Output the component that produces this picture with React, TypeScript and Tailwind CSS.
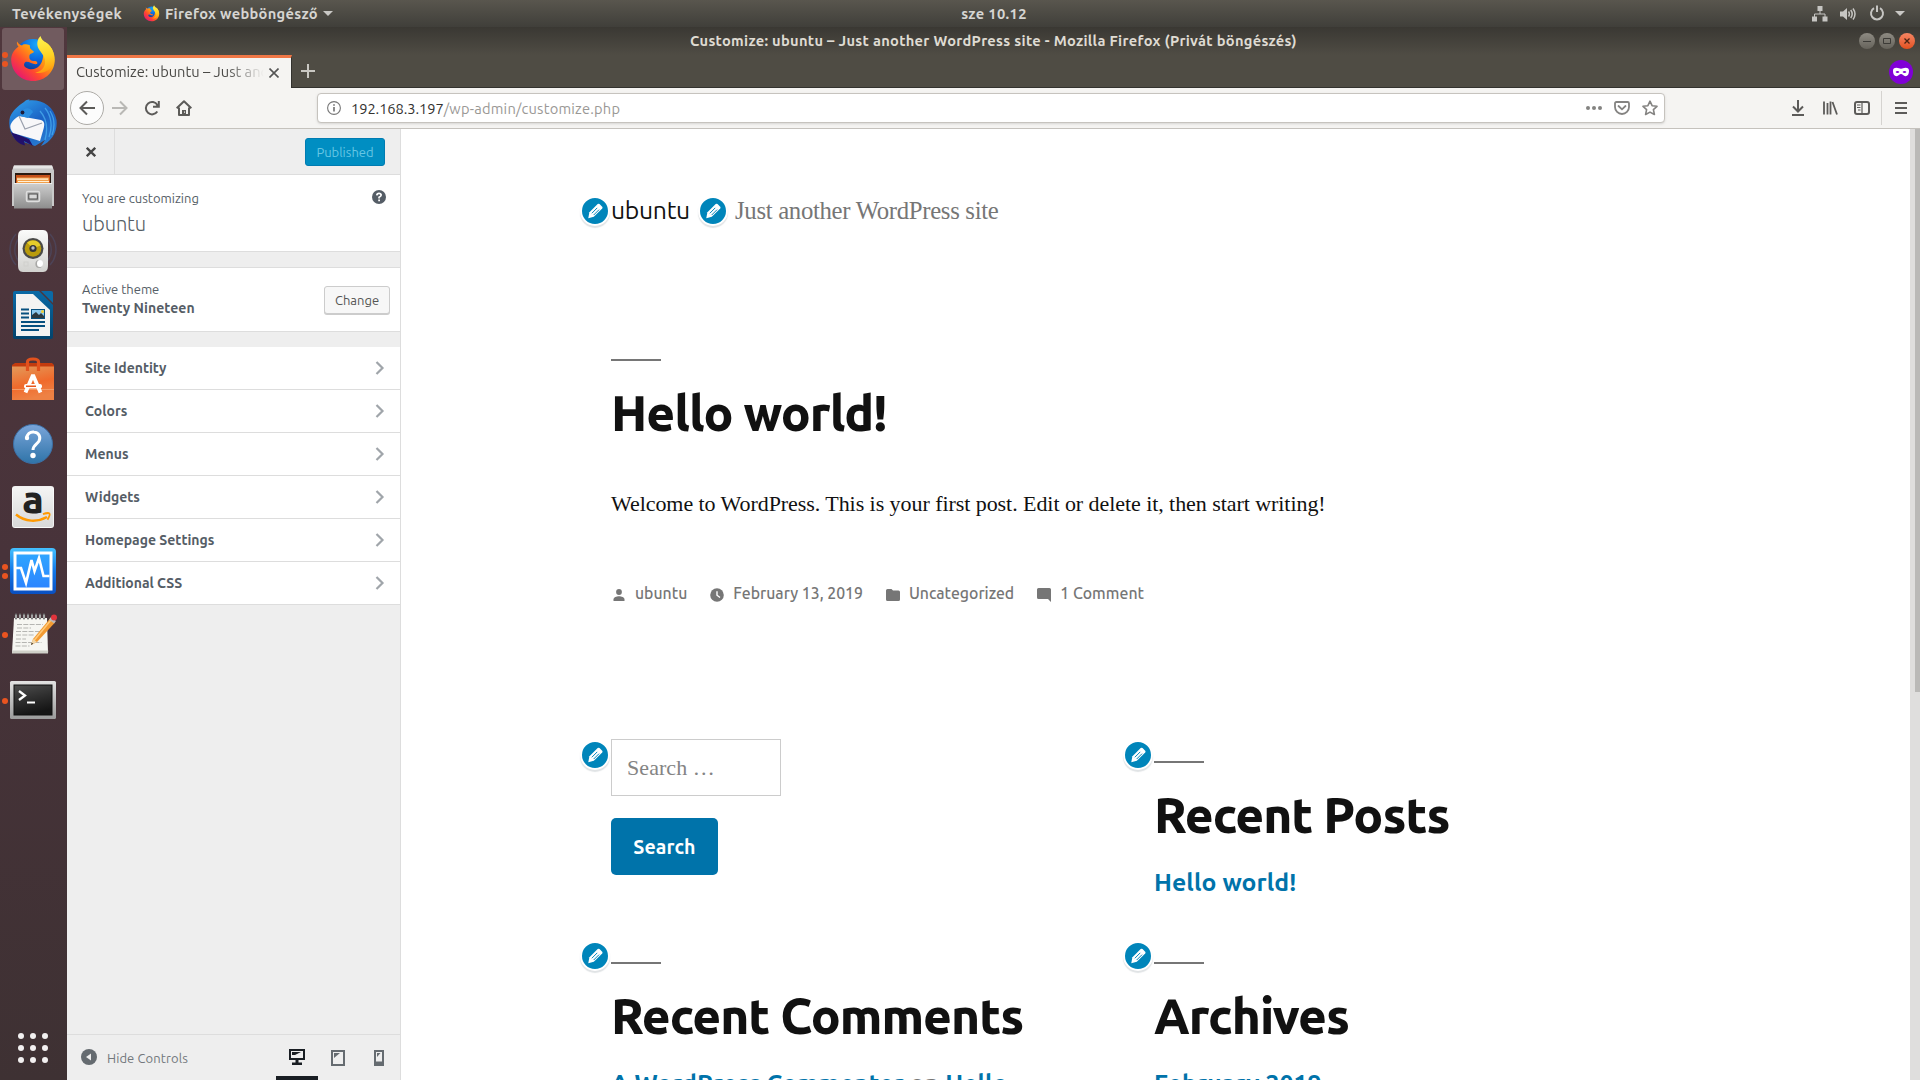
import React from "react";

/* ---------- dock icons ---------- */

function FirefoxLogo({ className, id }: { className: string; id: string }) {
  return (
    <svg viewBox="0 0 48 48" className={className}>
      <defs>
        <linearGradient id={id + "-body"} x1="0.9" y1="0.1" x2="0.1" y2="0.9">
          <stop offset="0" stopColor="#ffe226" />
          <stop offset="0.35" stopColor="#ff9d10" />
          <stop offset="0.65" stopColor="#ff4a2e" />
          <stop offset="1" stopColor="#e3117a" />
        </linearGradient>
        <radialGradient id={id + "-globe"} cx="0.6" cy="0.15" r="0.9">
          <stop offset="0" stopColor="#18a8fb" />
          <stop offset="0.5" stopColor="#0a64dc" />
          <stop offset="1" stopColor="#14246e" />
        </radialGradient>
        <linearGradient id={id + "-flame"} x1="0.4" y1="0" x2="0.5" y2="1">
          <stop offset="0" stopColor="#fff44f" />
          <stop offset="0.55" stopColor="#ffd325" />
          <stop offset="1" stopColor="#ff980e" />
        </linearGradient>
      </defs>
      <circle cx="24" cy="22" r="18" fill={"url(#" + id + "-globe)"} />
      <path d="M8 6.500C7.500 9 8.500 10.500 9.500 11.500 4.500 15 2 20 2.200 25.500 2.800 37.500 12.500 46 24.200 46 36.500 46 45.800 36.500 45.800 24.500 45.800 18 42 10 36 7L34 22C33 30 28 35.500 20 34 14.500 32.500 14 29 16.500 27 20 26 24 30 28 29 29 28 28 26 26 26 21 26 20 24 20.500 20 22 18 24.500 18 25 17 24 15 20 14.500 21 10.500 16 8.500 14 9.500 13 10.500 10 9.500 9 8 8 6.500Z" fill={"url(#" + id + "-body)"} />
      <path d="M31.500 1C28 4.500 27.500 9.500 29.500 13.500 32 18 37 22 36 28.500 35 34 30.500 37 26 37.500 34 39.500 41.500 35.500 44 29 47 20 43.500 12 37.500 8 34.500 6 32 4 31.500 1Z" fill={"url(#" + id + "-flame)"} />
    </svg>
  );
}

function ThunderbirdLogo() {
  return (
    <svg viewBox="0 0 48 48" className="size-12">
      <defs>
        <linearGradient id="tb-body" x1="0.2" y1="0" x2="0.8" y2="1">
          <stop offset="0" stopColor="#2f9be8" />
          <stop offset="0.5" stopColor="#1b62c4" />
          <stop offset="1" stopColor="#2a7fd4" />
        </linearGradient>
      </defs>
      <path d="M15 3C18 0 22 0 20 1.500 32 0 45 7 47.500 21 49 33 42 43 32 47L36 41 26 47 6 40C1 34-1 26 1 18 4 11 9 7 15 3Z" fill="url(#tb-body)" />
      <path d="M2 33C5 41 10 45 16 46.500L15 42 24 47 20 40Z" fill="#21106a" />
      <path d="M36 9C42 16 44 27 40 38M31 12C38 20 39 30 36 41M41 12c5 8 5 16 2 24" stroke="#4db4f2" strokeWidth="1.300" fill="none" opacity=".7" />
      <path d="M1.500 26C3 22 7 18.500 10 17L32 21C35 22 36 24 34.500 30L31 42 4 34C1.500 31 1 28 1.500 26Z" fill="#f7f7f9" />
      <path d="M10 17L16 30 33 24" stroke="#9aa0ad" strokeWidth="1.200" fill="none" />
      <path d="M12 13c4-5 9-5 12 0l-5 6-8-2Z" fill="#2a8de0" />
      <circle cx="13.500" cy="13.500" r="1.900" fill="#1d1d3a" />
    </svg>
  );
}

function FilesLogo() {
  return (
    <svg viewBox="0 0 48 48" className="size-12">
      <defs>
        <linearGradient id="fl-front" x1="0" y1="0" x2="0" y2="1">
          <stop offset="0" stopColor="#cfcfcf" />
          <stop offset="1" stopColor="#8d8d8d" />
        </linearGradient>
      </defs>
      <path d="M5 2.500h38l2 5V43H3V7.500Z" fill="#c9c9c9" />
      <path d="M5 2.500h38l1 3H4Z" fill="#e6e6e6" />
      <path d="M6 10h36v12H6Z" fill="#2b1a12" />
      <path d="M7 12h34v10H7Z" fill="#c4511c" />
      <path d="M8 14.500h32v7H8Z" fill="#f2a04a" />
      <path d="M8 15.500h31v1.200H8ZM9 18h31v.9H9Z" fill="#fff0d8" />
      <path d="M5 20h38v25.500H5Z" fill="url(#fl-front)" />
      <path d="M5 20h38v1H5Z" fill="#ededed" />
      <rect x="17.500" y="28.500" width="13" height="10" rx="1.500" fill="#a9a9a9" stroke="#dedede" strokeWidth="1.500" />
      <rect x="19.800" y="31" width="8.500" height="5" fill="#d8d8d8" stroke="#4a4a4a" />
    </svg>
  );
}

function RhythmboxLogo() {
  return (
    <svg viewBox="0 0 48 48" className="size-12">
      <defs>
        <linearGradient id="rb-box" x1="0" y1="0" x2="0" y2="1">
          <stop offset="0" stopColor="#fbfbfa" />
          <stop offset="1" stopColor="#d2d2cf" />
        </linearGradient>
      </defs>
      <path d="M7 7C-1 16-1 29 7 38M11 10C4 18 4 28 11 36M41 7c8 9 8 22 0 31M37 10c7 8 7 18 0 26" stroke="#4c5f8a" strokeWidth="1.500" fill="none" opacity=".35" />
      <path d="M14 3h20c4 0 5 3 5 7v28c0 4-1 7-5 7H14c-4 0-5-3-5-7V10c0-4 1-7 5-7Z" fill="url(#rb-box)" />
      <circle cx="24" cy="21.500" r="10.500" fill="#4a4a48" />
      <circle cx="24" cy="21.500" r="8.300" fill="#b99b0c" />
      <path d="M24 13.500a8 8 0 0 1 7.500 5L24 21.500l-6-6a8 8 0 0 1 6-2Z" fill="#e6cc2a" />
      <circle cx="24" cy="21.500" r="3.600" fill="#353538" />
      <circle cx="24" cy="21" r="1.700" fill="#b9bcc4" />
      <ellipse cx="30" cy="37" rx="3.600" ry="4" fill="#a9a9a7" />
      <ellipse cx="31" cy="36.500" rx="3" ry="3.600" fill="#fff" />
      <rect x="15" y="35" width="4" height="4" fill="none" stroke="#d0d0cc" />
    </svg>
  );
}

function WriterLogo() {
  return (
    <svg viewBox="0 0 48 48" className="size-12">
      <defs>
        <linearGradient id="wr" x1="0" y1="0" x2="0" y2="1">
          <stop offset="0" stopColor="#0a6aa6" />
          <stop offset="1" stopColor="#02436c" />
        </linearGradient>
      </defs>
      <path d="M6 0h24l14 14v32a2 2 0 0 1-2 2H6a2 2 0 0 1-2-2V2a2 2 0 0 1 2-2Z" fill="url(#wr)" />
      <path d="M32 0h10a2 2 0 0 1 2 2v10Z" fill="#0b6aa6" />
      <path d="M7 3h17l17 16v26H7Z" fill="#f3f3f2" />
      <path d="M12 18.500h8M12 22.500h8M12 26.500h8M12 31h24M12 35h24M12 39h18" stroke="#07507f" strokeWidth="2" />
      <rect x="22.500" y="18.500" width="13" height="9" fill="#8cc9ee" stroke="#07507f" />
      <path d="M23 27v-3l4-3 3 3 2-2 3 3v2Z" fill="#2d3a40" />
      <circle cx="33.500" cy="20.500" r="1.500" fill="#f2cf32" />
    </svg>
  );
}

function SoftwareLogo() {
  return (
    <svg viewBox="0 0 48 48" className="mt-[2px] size-12">
      <defs>
        <linearGradient id="sw" x1="0" y1="0" x2="0.3" y2="1">
          <stop offset="0" stopColor="#e39a5a" />
          <stop offset="0.6" stopColor="#f06a2c" />
          <stop offset="1" stopColor="#ee8144" />
        </linearGradient>
      </defs>
      <path d="M3 9l3-2h37l2 2v5H3Z" fill="#c23b0e" />
      <path d="M3 10.500h42V44H3Z" fill="url(#sw)" />
      <path d="M3 33h42v1H3Z" fill="#f49a66" />
      <path d="M18.500 15V6q0-3 5.500-3t5.500 3v9" stroke="#e2521d" strokeWidth="3.200" fill="none" />
      <path d="M16.500 36.500l7.500-17.500 7.500 17.500" stroke="#fff" strokeWidth="3.800" fill="none" strokeLinejoin="bevel" />
      <rect x="15" y="28" width="18" height="4.500" rx="2" fill="#fff" />
      <rect x="17" y="29.500" width="10" height="1.500" fill="#e8571d" />
    </svg>
  );
}

function HelpLogo() {
  return (
    <svg viewBox="0 0 48 48" className="mt-px size-12">
      <defs>
        <linearGradient id="hp" x1="0" y1="0" x2="0" y2="1">
          <stop offset="0" stopColor="#7aa5da" />
          <stop offset="1" stopColor="#2f74a8" />
        </linearGradient>
      </defs>
      <circle cx="24" cy="24" r="19.500" fill="url(#hp)" stroke="#3c6fa5" />
      <path d="M17.500 18.500C18 14 21 11.500 25 12c5 .5 7 5 5 9-2 3.500-6 4-6 9" stroke="#fff" strokeWidth="3" fill="none" />
      <circle cx="18" cy="18" r="2.200" fill="#fff" />
      <circle cx="24" cy="35.500" r="2.700" fill="#fff" />
    </svg>
  );
}

function AmazonLogo() {
  return (
    <div className="relative flex size-[42px] justify-center rounded-[3px] border border-white/60 bg-linear-to-b from-[#f4f4f4] to-[#d9d9d9]">
      <span className="-mt-[11px] font-[Ubuntu,'Noto_Sans',sans-serif] text-[39px] leading-[46px] font-extrabold text-[#222]">a</span>
      <svg viewBox="0 0 40 14" className="absolute bottom-[3px] left-0 h-[14px] w-10">
        <path d="M3 4.500C12 12 24 12.500 34 7" stroke="#ff9900" strokeWidth="2.500" fill="none" />
        <path d="M30 4.200c3-1.200 6-1.200 6.500-.5s-.5 3.500-2 6" stroke="#ff9900" strokeWidth="1.800" fill="none" />
      </svg>
    </div>
  );
}

function MonitorLogo() {
  return (
    <svg viewBox="0 0 48 48" className="size-12">
      <defs>
        <linearGradient id="mn" x1="0" y1="0" x2="0" y2="1">
          <stop offset="0" stopColor="#44c1ff" />
          <stop offset="0.5" stopColor="#1277e8" />
          <stop offset="1" stopColor="#0a4fc0" />
        </linearGradient>
        <linearGradient id="mn2" x1="0" y1="0" x2="0" y2="1">
          <stop offset="0" stopColor="#2fa6ff" />
          <stop offset="1" stopColor="#2c84ff" />
        </linearGradient>
      </defs>
      <rect x="1" y="1" width="46" height="46" rx="4" fill="url(#mn)" />
      <rect x="6" y="6" width="36" height="36" fill="url(#mn2)" stroke="#fff" strokeWidth="3" />
      <path d="M7 21h5l5 15 5.500-23 3 11 4.500-13 4.500 18h6" stroke="#fff" strokeWidth="2.600" fill="none" />
    </svg>
  );
}

function NotesLogo() {
  return (
    <svg viewBox="0 0 48 48" className="size-12">
      <path d="M5 7h33l1 35H3Z" fill="#f6f6f2" />
      <path d="M3.200 39.500h36L39 42.500H3Z" fill="#cfd0c8" />
      <path d="M7 7.500v-4M11 7.500v-4M15 7.500v-4M19 7.500v-4M23 7.500v-4M27 7.500v-4M31 7.500v-4M35 7.500v-4" stroke="#777" strokeWidth="2.200" strokeLinecap="round" />
      <path d="M7 7v-3M11 7v-3M15 7v-3M19 7v-3M23 7v-3M27 7v-3M31 7v-3M35 7v-3" stroke="#e8e8e8" strokeWidth=".8" />
      <path d="M8 13.500h26M8 17h14M7 20.500h24M7 24h18M7 28h10M6.500 31.500h26M6.500 35h14" stroke="#b5b5b2" strokeWidth="1.200" strokeDasharray="5 1.300" />
      <path d="M22 34l2-6L41 7.500l5 4L28 31Z" fill="#f39a31" />
      <path d="M25 29.500L42 9" stroke="#ffca7a" strokeWidth="1.500" />
      <path d="M22 34l2-6 4 3Z" fill="#f1d6a8" />
      <path d="M22 34l.8-2.200 1.400 1Z" fill="#222" />
      <path d="M40 8.500l2-2.500 5 4-2 2.500Z" fill="#b9b9b9" />
      <circle cx="45" cy="6.500" r="3" fill="#e0343c" />
    </svg>
  );
}

function TerminalLogo() {
  return (
    <svg viewBox="0 0 48 48" className="size-12">
      <defs>
        <linearGradient id="tm" x1="0" y1="0" x2="0.3" y2="1">
          <stop offset="0" stopColor="#4e4e4e" />
          <stop offset="0.5" stopColor="#303030" />
          <stop offset="1" stopColor="#151515" />
        </linearGradient>
        <linearGradient id="tm2" x1="0" y1="0" x2="0" y2="1">
          <stop offset="0" stopColor="#e2e2e2" />
          <stop offset="1" stopColor="#9b9b9b" />
        </linearGradient>
      </defs>
      <rect x="1" y="4" width="46" height="38" rx="1.500" fill="url(#tm2)" />
      <rect x="5" y="8" width="38" height="30" fill="url(#tm)" stroke="#111" />
      <path d="M10 14l6 4.500-6 4.500" stroke="#fff" strokeWidth="2.300" fill="none" />
      <path d="M18 25.500h8" stroke="#fff" strokeWidth="2" />
    </svg>
  );
}

const dockItems = [
  { icon: <FirefoxLogo className="size-12" id="ffd" />, dots: 2, active: true },
  { icon: <ThunderbirdLogo />, dots: 0 },
  { icon: <FilesLogo />, dots: 0 },
  { icon: <RhythmboxLogo />, dots: 0 },
  { icon: <WriterLogo />, dots: 0 },
  { icon: <SoftwareLogo />, dots: 0 },
  { icon: <HelpLogo />, dots: 0 },
  { icon: <AmazonLogo />, dots: 0 },
  { icon: <MonitorLogo />, dots: 2 },
  { icon: <NotesLogo />, dots: 1 },
];

function DockItem({ icon, dots, active }: { icon: React.ReactNode; dots: number; active?: boolean }) {
  return (
    <div className={"relative flex h-[62px] w-[62px] items-center justify-center rounded-[3px] " + (active ? "bg-[#715b5f]" : "")}>
      <div className="absolute top-0 left-0 flex h-full w-[6px] flex-col items-center justify-center gap-[3px]">
        {Array.from({ length: dots }, (_, i) => (
          <span key={i} className="size-[6px] rounded-full bg-[#e95420]" />
        ))}
      </div>
      {icon}
    </div>
  );
}

function Dock() {
  return (
    <div className="flex w-[67px] shrink-0 flex-col bg-linear-to-b from-[#50373d] via-[#48333a] to-[#3e3133] pt-px pl-[2px]">
      <div className="flex flex-col gap-[2px]">
        {dockItems.map((d, i) => (
          <DockItem key={i} {...d} />
        ))}
      </div>
      <div className="mt-[4px]">
        <DockItem icon={<TerminalLogo />} dots={1} />
      </div>
      <div className="mt-auto mb-[17px] ml-[16px] grid w-[30px] grid-cols-3 gap-[6px]">
        {Array.from({ length: 9 }, (_, i) => (
          <span key={i} className="size-[6px] rounded-full bg-[#f2f0f0]" />
        ))}
      </div>
    </div>
  );
}

/* ---------- desktop top bar ---------- */

function TopBar() {
  return (
    <div className="grid h-[27px] shrink-0 grid-cols-[1fr_auto_1fr] items-center bg-linear-to-b from-[#59564e] to-[#403f3a] text-[14.67px] leading-[27px] font-bold tracking-[0.36px] text-[#d6d5d2]">
      <div className="flex items-center pl-[12px]">
        <span>Tevékenységek</span>
        <FirefoxLogo className="ml-[21px] size-[17px]" id="ffs" />
        <span className="ml-[5px] tracking-[0.3px]">Firefox webböngésző</span>
        <svg viewBox="0 0 10 5" className="ml-[5px] h-[5px] w-[10px]">
          <path d="M0 0h10L5 5Z" fill="#c9c8c5" />
        </svg>
      </div>
      <span className="translate-x-[34px]">sze 10.12</span>
      <div className="flex items-center justify-end pr-[15px]">
        <svg viewBox="0 0 16 16" className="size-4" fill="#c6c5c2">
          <path d="M5.500 0h5v5h-5ZM0 10.500h5v5H0ZM10.500 10.500h5v5h-5Z" />
          <path d="M8 5v3M2.500 11V8h10.500v3" stroke="#c6c5c2" fill="none" />
        </svg>
        <svg viewBox="0 0 16 14" className="ml-[12px] h-[14px] w-4">
          <path d="M0 4.500h3L7 1v12L3 9.500H0Z" fill="#c6c5c2" />
          <path d="M8.500 4.500q1.800 2.500 0 5M10.700 3q3 4 0 8M13 1.500q4 5.500 0 11" stroke="#c6c5c2" strokeWidth="1.500" fill="none" />
        </svg>
        <svg viewBox="0 0 16 16" className="-mt-px ml-[13px] size-4" fill="none" stroke="#c6c5c2" strokeWidth="2">
          <path d="M5 3.200a6 6 0 1 0 6 0M8 .5v6.500" />
        </svg>
        <svg viewBox="0 0 10 5" className="ml-[10px] h-[5px] w-[10px]">
          <path d="M0 0h10L5 5Z" fill="#c9c8c5" />
        </svg>
      </div>
    </div>
  );
}

/* ---------- browser chrome ---------- */

function TitleBar() {
  return (
    <div className="relative flex h-[28px] shrink-0 items-center justify-center bg-linear-to-b from-[#3a3833] to-[#4f4c44] text-[14.67px] font-bold tracking-[0.3px] text-[#dfdbd2]">
      <span>Customize: ubuntu – Just another WordPress site - Mozilla Firefox (Privát böngészés)</span>
      <div className="absolute top-[6px] right-[5px] flex gap-1">
        <span className="size-4 rounded-full bg-linear-to-b from-[#8e8b83] to-[#66635b]">
          <svg viewBox="0 0 16 16"><path d="M4 8.500h8" stroke="#3c3b37" /></svg>
        </span>
        <span className="size-4 rounded-full bg-linear-to-b from-[#8e8b83] to-[#66635b]">
          <svg viewBox="0 0 16 16"><path d="M4.500 5.500h7v5h-7Z" stroke="#3c3b37" fill="none" /></svg>
        </span>
        <span className="size-4 rounded-full bg-linear-to-b from-[#f58562] to-[#e2501c]">
          <svg viewBox="0 0 16 16"><path d="M5.500 5.500l5 5M10.500 5.500l-5 5" stroke="#4a2413" strokeWidth="1.300" /></svg>
        </span>
      </div>
    </div>
  );
}

function TabBar() {
  return (
    <div className="flex h-[33px] shrink-0 bg-[#4f4c44]">
      <div className="flex w-[225px] items-center border-t-[3px] border-r border-t-[#f07746] border-r-[#33322e] bg-[#f5f4f2] pl-[9px]">
        <div className="h-[30px] w-[188px] overflow-hidden mask-r-from-80% mask-r-to-100% text-[14.67px] leading-[28px] whitespace-nowrap text-[#4a4946]">
          Customize: ubuntu – Just another
        </div>
        <svg viewBox="0 0 10 10" className="-mt-px ml-[5px] size-[10px]">
          <path d="M.5.5l9 9M9.500.5l-9 9" stroke="#555" strokeWidth="1.600" />
        </svg>
      </div>
      <div className="flex flex-1 items-center border-b border-[#33322e]">
        <svg viewBox="0 0 14 14" className="ml-[9px] size-[14px]">
          <path d="M7 0v14M0 7h14" stroke="#c9c7c2" strokeWidth="2" />
        </svg>
        <span className="mt-px mr-[7px] ml-auto flex size-6 items-center justify-center rounded-full bg-[#8000d7]">
          <svg viewBox="0 0 16 10" className="h-[10px] w-4">
            <path fillRule="evenodd" d="M3.500.8C5.500.8 6.500 1.800 8 1.800S10.500.8 12.500.8C15 .8 16 2 16 4c0 3-1.200 5.200-3.500 5.200-2 0-3-2.200-4.500-2.200S5.500 9.200 3.500 9.200C1.200 9.200 0 7 0 4 0 2 1 .8 3.500.8ZM2.500 5c1 1.300 3 1.300 4 0C5.500 3.500 3.500 3.500 2.500 5Zm7 0c1 1.300 3 1.300 4 0-1-1.500-3-1.500-4 0Z" fill="#fff" />
          </svg>
        </span>
      </div>
    </div>
  );
}

function Toolbar() {
  return (
    <div className="flex h-[41px] shrink-0 items-center border-b border-[#c5c2bd] bg-[#f5f4f2] pl-[3px] text-[#5c5b59]">
      <span className="flex size-[34px] items-center justify-center rounded-full border border-[#adaba7] bg-[#fcfcfc]">
        <svg viewBox="0 0 16 16" className="size-4" fill="none" stroke="currentColor" strokeWidth="2">
          <path d="M16 8H1.500M8 1.500L1.500 8 8 14.500" />
        </svg>
      </span>
      <svg viewBox="0 0 16 16" className="ml-[8px] size-4" fill="none" stroke="#b9b8b5" strokeWidth="2">
        <path d="M0 8h14.500M8 1.500L14.500 8 8 14.500" />
      </svg>
      <svg viewBox="0 0 16 16" className="ml-[16px] size-4" fill="none" stroke="currentColor" strokeWidth="2">
        <path d="M13.300 11.500A6.200 6.200 0 1 1 13.400 5" />
        <path d="M14.800 1v5.700H9" />
        <path d="M15 2.500v4.200h-4Z" fill="currentColor" stroke="none" />
      </svg>
      <svg viewBox="0 0 16 16" className="ml-[16px] size-4" fill="none" stroke="currentColor" strokeWidth="2">
        <path d="M.7 8.300L8 1.200l7.300 7.100M3 7.500V15h10V7.500" strokeLinejoin="round" />
        <path d="M6 10h4v5H6Z" fill="currentColor" stroke="none" />
        <path d="M8 11.500h1v1.200H8Z" fill="#f5f4f2" stroke="none" />
      </svg>
      <div className="ml-[125px] flex h-[30px] w-[1348px] items-center rounded-[4px] border border-[#c6c3be] bg-white pl-[9px] text-[14.67px] shadow-sm">
        <svg viewBox="0 0 14 14" className="size-[14px]" fill="none" stroke="#777" strokeWidth="1.100">
          <circle cx="7" cy="7" r="6.400" />
          <path d="M7 6v4.500M7 3.200v1.600" strokeWidth="1.700" />
        </svg>
        <span className="mt-[2px] ml-[10px] tracking-[-0.06px] text-[#33322f]">192.168.3.197</span>
        <span className="mt-[2px] tracking-[0.22px] text-[#9a9895]">/wp-admin/customize.php</span>
        <div className="mr-[6px] ml-auto flex items-center text-[#848381]">
          <svg viewBox="0 0 16 4" className="h-1 w-4" fill="currentColor">
            <circle cx="2" cy="2" r="2" /><circle cx="8" cy="2" r="2" /><circle cx="14" cy="2" r="2" />
          </svg>
          <svg viewBox="0 0 16 16" className="ml-[12px] size-4" fill="none" stroke="currentColor" strokeWidth="1.800">
            <path d="M2.400 2h11.200q1.400 0 1.400 1.400V7a7 7 0 0 1-14 0V3.400Q1 2 2.400 2Z" />
            <path d="M4.500 6L8 9.300 11.500 6" strokeLinecap="round" />
          </svg>
          <svg viewBox="0 0 16 16" className="ml-[12px] size-4" fill="none" stroke="currentColor" strokeWidth="1.600" strokeLinejoin="round">
            <path d="M8 1.200l2.100 4.500 4.900.6-3.600 3.300 1 4.900L8 12.100l-4.400 2.400 1-4.900L1 6.300l4.900-.6Z" />
          </svg>
        </div>
      </div>
      <div className="ml-auto flex h-full items-center">
        <svg viewBox="0 0 16 16" className="size-4" fill="none" stroke="currentColor" strokeWidth="2">
          <path d="M8 0v11M3 6.500l5 5 5-5M2 15h12" />
        </svg>
        <svg viewBox="0 0 16 16" className="ml-[16px] size-4" fill="none" stroke="currentColor" strokeWidth="2">
          <path d="M2 1.500v13M5.500 3v11.500M8.500 1.500v13M10.500 2l4.500 12.500" strokeWidth="1.800" />
        </svg>
        <svg viewBox="0 0 16 16" className="ml-[16px] size-4" fill="none" stroke="currentColor" strokeWidth="2">
          <rect x="1" y="2" width="14" height="12" rx="2" />
          <path d="M8 2v12" strokeWidth="1.200" />
          <path d="M3 5h3.500M3 7.500h3.500M4 10h2.500" strokeWidth="1" />
        </svg>
        <span className="ml-[11px] h-[34px] w-px bg-[#d5d3d0]" />
        <svg viewBox="0 0 12 12" className="mr-[13px] ml-[13px] h-3 w-3" stroke="currentColor" strokeWidth="2">
          <path d="M0 1h12M0 6h12M0 11h12" />
        </svg>
      </div>
    </div>
  );
}

/* ---------- customizer sidebar ---------- */

const sections = ["Site Identity", "Colors", "Menus", "Widgets", "Homepage Settings", "Additional CSS"];

function Sidebar() {
  return (
    <div className="flex w-[334px] shrink-0 flex-col border-r border-[#dddddd] bg-[#eeeeee] text-[13px] text-[#555d66]">
      <div className="flex h-[46px] shrink-0 border-b border-[#dddddd]">
        <div className="flex w-[48px] items-center justify-center border-r border-[#dddddd]">
          <svg viewBox="0 0 10 10" className="size-[10px]">
            <path d="M.8.8l8.400 8.400M9.200.8L.8 9.200" stroke="#444" strokeWidth="2.300" />
          </svg>
        </div>
        <div className="mt-[9px] mr-[15px] ml-auto flex h-[28px] w-[80px] items-center justify-center rounded-[3px] border border-[#007cb2] bg-[#008ec2] pt-[2px] text-[#66c6e4]">
          Published
        </div>
      </div>
      <div className="flex h-[77px] shrink-0 justify-between border-b border-[#dddddd] bg-white pt-[13px] pr-[14px] pl-[15px]">
        <div>
          <div className="leading-[20px]">You are customizing</div>
          <div className="mt-px text-[20px] leading-[30px] font-light tracking-[-0.1px]">ubuntu</div>
        </div>
        <svg viewBox="0 0 14 14" className="mt-[2px] size-[14px]">
          <circle cx="7" cy="7" r="7" fill="#555d66" />
          <path d="M4.800 5.300Q5 3.300 7 3.300t2.200 1.800Q9.200 6.300 7.100 7.300V8.500" stroke="#fff" strokeWidth="1.700" fill="none" />
          <path d="M6.200 9.500h1.800v1.700H6.200Z" fill="#fff" />
        </svg>
      </div>
      <div className="mt-[15px] flex h-[65px] shrink-0 items-start justify-between border-y border-[#dddddd] bg-white pt-[12px] pr-[10px] pl-[15px]">
        <div>
          <div className="leading-[18px]">Active theme</div>
          <div className="mt-px text-[14px] leading-[19px] font-bold tracking-[0.04px]">Twenty Nineteen</div>
        </div>
        <div className="mt-[6px] flex h-[28px] w-[66px] items-center justify-center rounded-[3px] border border-[#cccccc] bg-[#f7f7f7] pt-[2px] text-[#555555] shadow-[0_1px_0_#cccccc]">
          Change
        </div>
      </div>
      <div className="mt-[15px] flex shrink-0 flex-col">
        {sections.map((s) => (
          <div key={s} className="flex h-[43px] items-center border-b border-[#dddddd] bg-white pr-[15px] pl-[18px] text-[14px] font-bold">
            <span>{s}</span>
            <svg viewBox="0 0 10 14" className="ml-auto h-[14px] w-[10px]">
              <path d="M1.500 1l6 6-6 6" stroke="#a0a5aa" strokeWidth="2.200" fill="none" />
            </svg>
          </div>
        ))}
      </div>
      <div className="mt-auto flex h-[46px] shrink-0 items-center border-t border-[#dddddd] pl-[14px] text-[#72777c]">
        <svg viewBox="0 0 16 16" className="-mt-px size-4">
          <circle cx="8" cy="8" r="8" fill="#656b70" />
          <path d="M10 4.500v7L5 8Z" fill="#eee" />
        </svg>
        <span className="mt-[2px] ml-[10px] tracking-[0.1px]">Hide Controls</span>
        <div className="ml-auto flex h-full">
          <div className="flex w-[42px] items-center justify-center border-b-4 border-[#191e23]">
            <svg viewBox="0 0 16 16" className="mt-[3px] size-4">
              <path d="M0 0h16v11H9.500v2.500H13V16H3v-2.500h3.500V11H0Z" fill="#191e23" />
              <path d="M2 2h12v7H2Z" fill="#eee" />
              <path d="M3 3h9L6 6H3Z" fill="#191e23" />
            </svg>
          </div>
          <div className="flex w-[40px] items-center justify-center pt-[2px] pb-px">
            <svg viewBox="0 0 14 16" className="h-4 w-[14px]">
              <path d="M1 1h12v14H1Z" fill="none" stroke="#656b70" strokeWidth="2" />
              <path d="M3 3h6L3 8Z" fill="#656b70" />
            </svg>
          </div>
          <div className="mr-px flex w-[41px] items-center justify-center pt-[2px] pb-px">
            <svg viewBox="0 0 10 16" className="h-4 w-[10px]">
              <path d="M0 0h10v16H0Z" fill="#656b70" />
              <path d="M2 2h6v9.500H2Z" fill="#eee" />
              <path d="M3 3h3.500L3 7Z" fill="#656b70" />
            </svg>
          </div>
        </div>
      </div>
    </div>
  );
}

/* ---------- site preview ---------- */

function EditBadge({ className }: { className: string }) {
  return (
    <span className={"absolute flex size-[30px] items-center justify-center rounded-full border-2 border-white bg-[#0085ba] shadow-[0_2px_1px_rgba(46,68,83,0.15)] " + className}>
      <svg viewBox="0 0 20 20" className="size-[18px]">
        <path d="M2.500 18l1.300-6.500L13 2.300q1-.8 2 0l3 3q.8 1 0 1.900l-9.300 9.200Z" fill="#fff" />
        <path d="M6.500 12.500l6-6M8.500 14.500l6-6" stroke="#0085ba" strokeWidth="1.100" />
      </svg>
    </span>
  );
}

function Heading({ children }: { children: string }) {
  return (
    <>
      <div className="h-[2px] w-[50px] bg-[#767676]" />
      <h1 className="mt-[22px] h-[60px] text-[49.5px] leading-[60px] font-extrabold tracking-[-0.99px] whitespace-nowrap text-[#111111]">
        {children}
      </h1>
    </>
  );
}

function PostMeta() {
  return (
    <div className="mt-[59px] flex h-[20px] items-center text-[15.8px] leading-[20px] font-medium text-[#767676]">
      <svg viewBox="0 0 12 14" className="mt-[3px] ml-[2px] h-[14px] w-3" fill="currentColor">
        <circle cx="6" cy="4" r="2.900" />
        <path d="M.5 13v-1.500C.5 9.300 3.500 8.300 6 8.300s5.500 1 5.500 3.200V13Z" />
      </svg>
      <span className="ml-[10px]">ubuntu</span>
      <svg viewBox="0 0 14 14" className="mt-[3px] ml-[23px] size-[14px]">
        <circle cx="7" cy="7" r="6.800" fill="currentColor" />
        <path d="M7 3.200v4l3 2.300" stroke="#fff" strokeWidth="1.400" fill="none" />
      </svg>
      <span className="ml-[9px]">February 13, 2019</span>
      <svg viewBox="0 0 14 12" className="mt-[3px] ml-[23px] h-3 w-[14px]" fill="currentColor">
        <path d="M1.500 0H5.500L7 1.500h5.500Q14 1.500 14 3v7.500Q14 12 12.500 12h-11Q0 12 0 10.500v-9Q0 0 1.500 0Z" />
      </svg>
      <span className="ml-[9px]">Uncategorized</span>
      <svg viewBox="0 0 14 14" className="mt-[4px] ml-[23px] size-[14px]" fill="currentColor">
        <path d="M1.500 0h11Q14 0 14 1.500V14l-3-3H1.500Q0 11 0 9.500v-8Q0 0 1.500 0Z" />
      </svg>
      <span className="ml-[9px] tracking-[0.05px]">1 Comment</span>
    </div>
  );
}

function Preview() {
  return (
    <div className="flex flex-1 overflow-hidden bg-white">
      <div className="flex flex-1 flex-col pt-[65px] pl-[210px]">
        <div className="relative flex h-[30px] leading-[32px] whitespace-nowrap">
          <EditBadge className="top-[2px] -left-[31px]" />
          <span className="w-[124px] text-[24.75px] tracking-[-0.3px] text-[#111111]">ubuntu</span>
          <EditBadge className="top-[2px] left-[87px]" />
          <span className="mt-px font-[Liberation_Serif,serif] text-[24.75px] tracking-[-0.31px] text-[#767676]">Just another WordPress site</span>
        </div>
        <div className="mt-[135px]">
          <Heading>Hello world!</Heading>
        </div>
        <p className="mt-[41px] h-[40px] font-[Liberation_Serif,serif] text-[22px] leading-[40px] tracking-[-0.06px] text-[#111111]">
          Welcome to WordPress. This is your first post. Edit or delete it, then start writing!
        </p>
        <PostMeta />
        <div className="mt-[136px] grid grid-cols-[543px_1fr] grid-rows-[201px_160px] text-[24.75px] leading-[30px] font-bold tracking-[0.07px] text-[#0073aa]">
          <section className="relative">
            <EditBadge className="top-px -left-[31px]" />
            <div className="flex h-[57px] w-[170px] items-center border border-[#cccccc] pl-[15px] font-[Liberation_Serif,serif] text-[22px] font-normal text-[#848484]">
              Search …
            </div>
            <div className="mt-[22px] flex h-[57px] w-[107px] items-center justify-center rounded-[5px] bg-[#0073aa] text-[19.55px] text-white">
              Search
            </div>
          </section>
          <section className="relative pt-[22px]">
            <EditBadge className="top-px -left-[31px]" />
            <Heading>Recent Posts</Heading>
            <div className="mt-[22px]">Hello world!</div>
          </section>
          <section className="relative pt-[22px]">
            <EditBadge className="top-px -left-[31px]" />
            <Heading>Recent Comments</Heading>
            <div className="mt-[22px]">
              A WordPress Commenter <span className="text-[#767676]">on</span> Hello
            </div>
          </section>
          <section className="relative pt-[22px]">
            <EditBadge className="top-px -left-[31px]" />
            <Heading>Archives</Heading>
            <div className="mt-[22px]">February 2019</div>
          </section>
        </div>
      </div>
      <div className="w-[10px] bg-[#dfdedd]">
        <div className="ml-auto h-[563px] w-[5px] bg-[#bab9b7]" />
      </div>
    </div>
  );
}

export default function App() {
  return (
    <div className="flex h-[1080px] w-[1920px] flex-col overflow-hidden bg-white font-[Ubuntu,'Noto_Sans',sans-serif]">
      <TopBar />
      <div className="flex min-h-0 flex-1">
        <Dock />
        <div className="flex min-w-0 flex-1 flex-col">
          <TitleBar />
          <TabBar />
          <Toolbar />
          <div className="flex min-h-0 flex-1">
            <Sidebar />
            <Preview />
          </div>
        </div>
      </div>
    </div>
  );
}
